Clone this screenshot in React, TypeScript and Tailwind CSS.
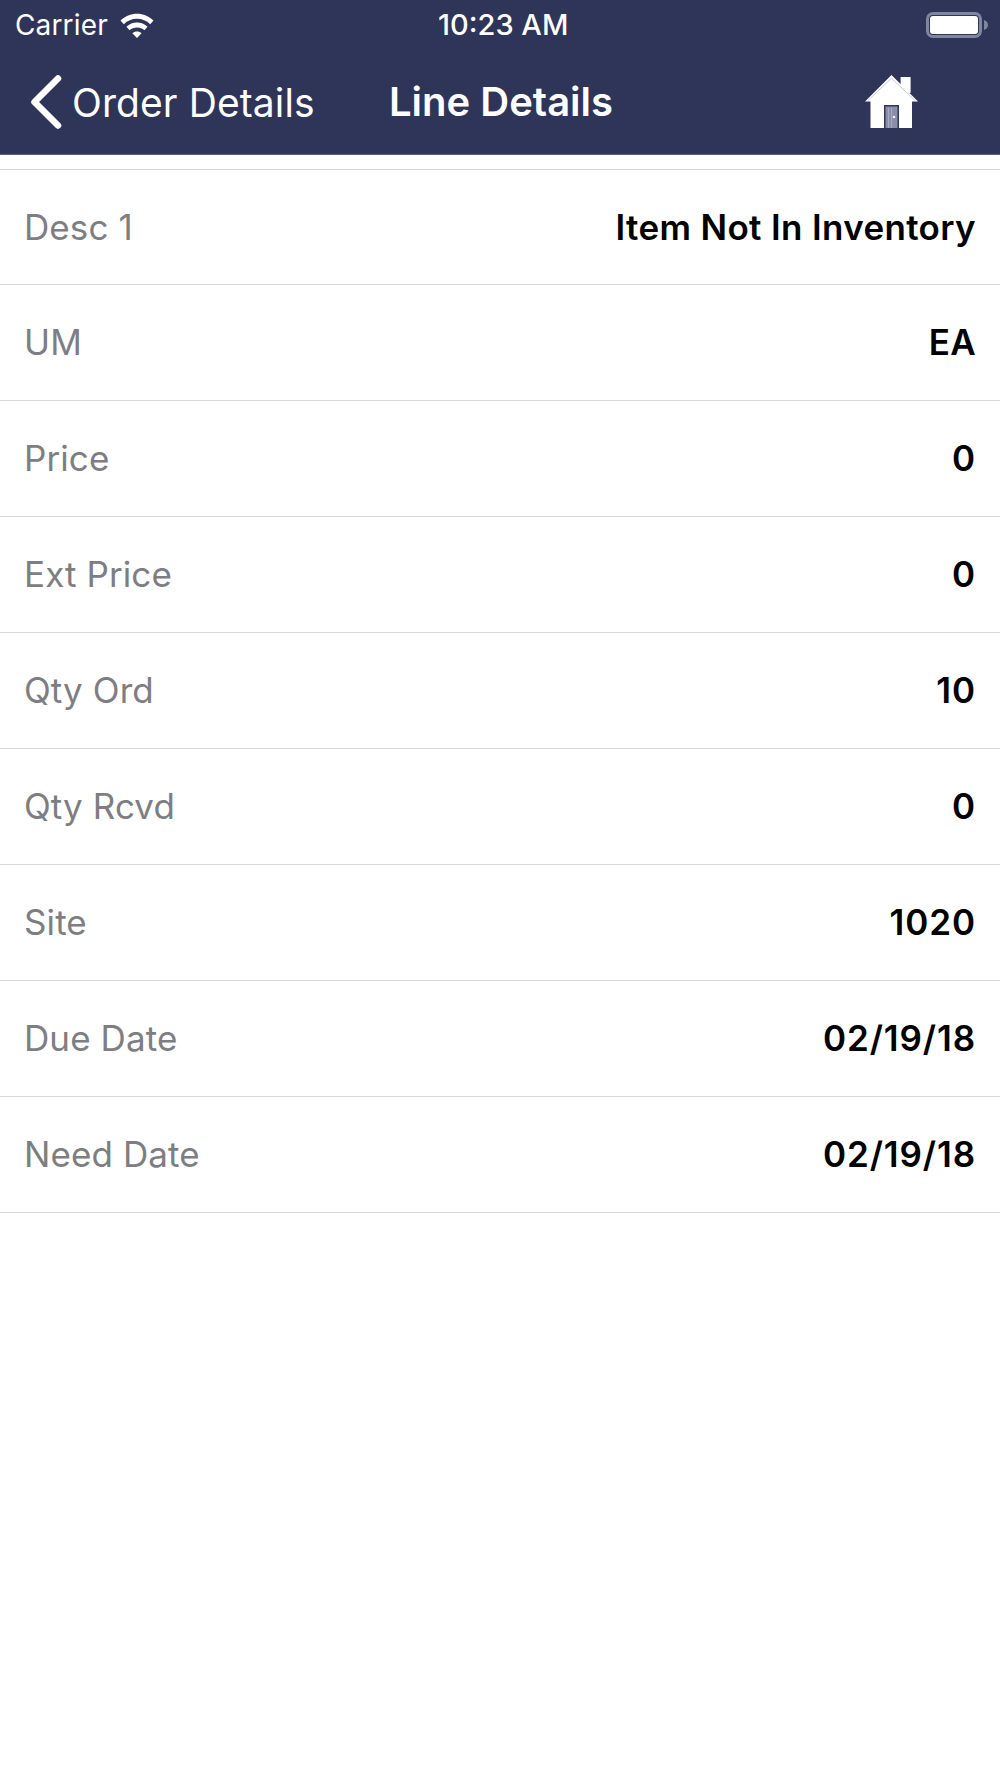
const rows: [string, string, string][] = [
  ["Desc 1", "Item Not In Inventory", "tracking-[0.35px]"],
  ["UM", "EA", "tracking-[0.35px]"],
  ["Price", "0", "tracking-[0.9px]"],
  ["Ext Price", "0", "tracking-[0.9px]"],
  ["Qty Ord", "10", "tracking-[0.9px]"],
  ["Qty Rcvd", "0", "tracking-[0.9px]"],
  ["Site", "1020", "tracking-[0.9px]"],
  ["Due Date", "02/19/18", "tracking-[0.9px]"],
  ["Need Date", "02/19/18", "tracking-[0.9px]"],
];

function Wifi() {
  return (
    <svg width="34" height="25" viewBox="0 0 34 25" className="ml-[12px]">
      <path d="M0.5 7.6C5 3.2 10.8 0.8 17 0.8S29 3.2 33.5 7.6L30.2 11.2C26.6 7.7 22 5.8 17 5.8S7.4 7.7 3.8 11.2Z" fill="#fff" />
      <path d="M6.4 13.8C9.3 11.1 13 9.6 17 9.6S24.7 11.1 27.6 13.8L24.4 17.3C22.4 15.5 19.8 14.5 17 14.5S11.6 15.5 9.6 17.3Z" fill="#fff" />
      <path d="M12.4 20.2C13.6 19.1 15.2 18.5 17 18.5S20.4 19.1 21.6 20.2L17 25Z" fill="#fff" />
    </svg>
  );
}

function Battery() {
  return (
    <div className="flex items-center">
      <div className="w-[56px] h-[26px] rounded-[7px] border-[3px] border-[#8085a0] p-[1px]">
        <div className="w-full h-full rounded-[3px] bg-white" />
      </div>
      <svg width="4" height="10" viewBox="0 0 4 10" className="ml-[2px]">
        <path d="M0 0C2.4 0.6 4 2.6 4 5S2.4 9.4 0 10Z" fill="#8085a0" />
      </svg>
    </div>
  );
}

function Home() {
  return (
    <svg width="53" height="53" viewBox="0 0 53 53">
      <path d="M35.6 2H45.6V18H35.6Z" fill="#fff" />
      <path d="M26.5 0L53 26.5H47V53H5.5V26.5H0Z" fill="#fff" />
      <path d="M2.5 26L26.5 3.2L50.5 26" fill="none" stroke="#c9cad6" strokeWidth="1" />
      <rect x="19" y="30" width="15" height="23" fill="#2f3459" />
      <rect x="20.5" y="31.5" width="12" height="21.5" fill="#8b8ea8" />
      <rect x="23" y="33" width="1" height="20" fill="#a9abc0" />
      <rect x="26" y="33" width="1" height="20" fill="#a9abc0" />
      <circle cx="29" cy="42" r="1.3" fill="#f0f0f5" />
    </svg>
  );
}

export default function App() {
  return (
    <div className="w-[1000px] h-[1778px] bg-white font-['Inter','Liberation_Sans',sans-serif] overflow-hidden">
      <header className="h-[155px] bg-[#2f3459] border-b border-[#5b5f80] text-white">
        <div className="h-[50px] relative flex items-center justify-between pl-[15px] pr-[12px]">
          <div className="flex items-center">
            <span className="text-[28px] leading-none tracking-[0.15px]">Carrier</span>
            <Wifi />
          </div>
          <span className="absolute left-[438px] top-[9px] text-[29px] leading-[32px] font-medium">10:23 AM</span>
          <Battery />
        </div>
        <div className="h-[104px] relative flex items-center">
          <svg width="34" height="54" viewBox="0 0 34 54" className="ml-[29px]">
            <path d="M29 3.5L5.5 27L29 50.5" fill="none" stroke="#fff" strokeWidth="6.5" strokeLinecap="round" strokeLinejoin="round" />
          </svg>
          <span className="ml-[9px] text-[39px] leading-none tracking-[0.1px]">Order Details</span>
          <span className="absolute left-[389px] top-[31px] text-[40px] leading-[42px] font-semibold">Line Details</span>
          <div className="absolute left-[865px] top-[25px]">
            <Home />
          </div>
        </div>
      </header>
      <div className="pt-[13.6px]">
        <div className="border-t border-[#d3d3d3]">
          {rows.map(([label, value, track]) => (
            <div
              key={label}
              className="h-[115.9px] flex items-center justify-between pl-[24px] pr-[24px] border-b-[1.5px] border-[#d8d8d8]"
            >
              <span className="text-[35px] leading-none text-[#7e7e82] tracking-[0.1px]">{label}</span>
              <span className={`text-[35px] leading-none font-semibold text-black ${track}`}>{value}</span>
            </div>
          ))}
        </div>
      </div>
    </div>
  );
}
